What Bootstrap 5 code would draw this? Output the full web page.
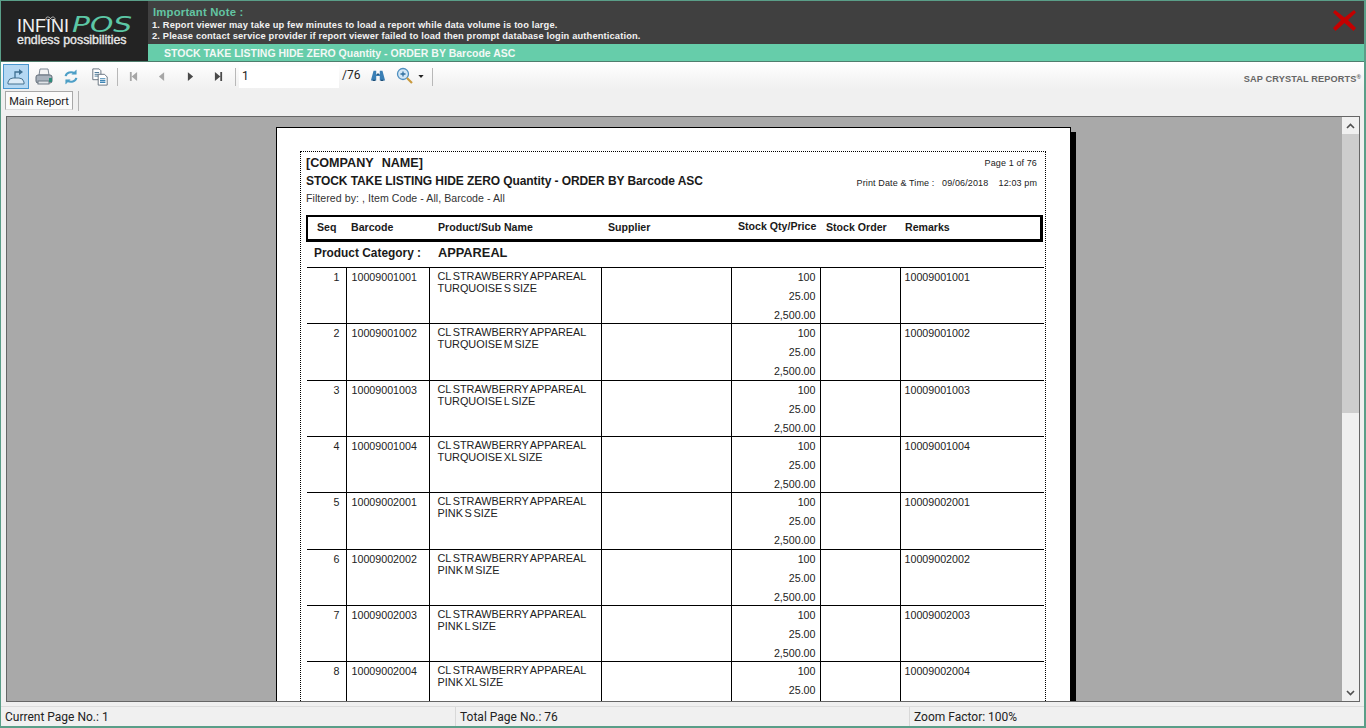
<!DOCTYPE html>
<html lang="en">
<head>
<meta charset="utf-8">
<title>Stock Take Listing</title>
<link href="https://cdn.jsdelivr.net/npm/bootstrap@5.3.0/dist/css/bootstrap.min.css" rel="stylesheet">
<style>
html,body{height:728px;overflow:hidden;margin:0}
body{font-family:"Liberation Sans",Arial,sans-serif;background:#f0f0f0;color:#000}
.app{height:728px;width:1366px;border:solid #5a9e88;border-width:1px 2px 2px 1px;overflow:hidden}
.top{height:60px}
.logo{width:147px;background:#232323;color:#fff;padding:14px 0 0 16px;line-height:1}
.logorow{height:22px}
.infini{font-size:18px;color:#f2f2f2}
.pos{display:inline-block;font-size:20.5px;font-style:italic;color:#5cc7a5;font-family:"DejaVu Sans",sans-serif;font-weight:400;margin-left:3px;transform:scaleX(1.45);transform-origin:left}
.inf{left:44px;top:15px}
.tag{font-size:12.4px;color:#e8e8e8;-webkit-text-stroke:.35px #e8e8e8;margin-top:-3px}
.note{height:43px;background:#404040;padding:4px 0 0 4px;color:#f2f2f2}
.note h6{font-size:11.3px;font-weight:700;color:#63c5a3;margin:0 0 1px 1px;line-height:14px;letter-spacing:.2px}
.note p{font-size:9.3px;font-weight:700;margin:0;line-height:11px;letter-spacing:.15px}
.band{height:17px;background:#66cdaa;color:#f2f8f5;font-size:10.5px;font-weight:700;padding-left:16px;line-height:18px;overflow:hidden}
.closex{top:7px;right:7px}
.tools{height:28px;border-top:1px solid #4f7d6d;background:linear-gradient(#fff,#f0f0f0);padding-left:2px}
.tb{width:26px;height:25px;border:1px solid transparent;margin-top:2px}
.tb.on{background:#b5d8f3;border-color:#4a97cf}
.g1{margin-left:1px}.g2{margin-left:2px}.g3{margin-left:3px}.g4{margin-left:4px}
.sep{width:1px;height:18px;background:#b8b8b8;margin-top:6px}
.pg{width:100px;height:22px;background:#fff;font:12px/20px Roboto,sans-serif;padding-left:3px;margin:4px 0 0 3px;color:#222}
.of{font:12px/26px Roboto,sans-serif;color:#222;margin-left:3px}
.bino{margin:6px 0 0 9px}
.zoomi{margin:5px 0 0 9px}
.caret{margin:13px 0 0 4px}
.endsep{margin-left:8px}
.sap{font-size:9.2px;font-weight:700;color:#666;margin:11px 3px 0 auto;letter-spacing:.12px}
.sap sup{font-size:6px}
.tabs{height:22px;padding:2px 0 0 4px}
.tabb{height:19px;width:68px;border:1px solid #a8a8a8;border-bottom-color:#ddd;background:#fbfbfb;font:11px/20px Roboto,sans-serif;text-align:center;color:#222}
.vsep{width:1px;height:20px;background:#b4b4b4;margin-left:5px}
.viewer{height:586px;margin:5px 4px 0 5px;border:1px solid #666;overflow:hidden;background:#a9a9a9}
.canvas{overflow:hidden;padding:10px 2px 0 0}
.paper{width:795px;height:700px;background:#fff;border:solid #000;border-width:1px 1px 0 1px;padding:23px 24px 0 23px;box-shadow:5px 5px 0 #000}
.rpt{border:1px dotted #000;border-bottom:0;height:700px;width:746px;padding-left:5px;color:#1a1a1a}
.head{height:63px;padding-right:8px}
.co{font-size:12.6px;font-weight:700;line-height:14px;padding-top:4px;word-spacing:.5px}
.ti{font-size:12px;font-weight:700;line-height:14px;margin-top:4px;letter-spacing:-.08px}
.fl{font-size:10.6px;line-height:12px;margin-top:4px;color:#333;letter-spacing:.05px}
.meta{font-size:9px;text-align:right;color:#222;letter-spacing:.12px}
.meta div:first-child{padding-top:6px;line-height:11px}
.meta div+div{margin-top:9px;line-height:11px}
.meta span{margin-left:5px}
.hdr{display:grid;grid-template-columns:43px 87px 170px 130px 88px 79px 1fr;width:737px;height:27px;border:solid #000;border-width:2px 3px 3px 2px;font-size:10.6px;font-weight:700;line-height:21px}
.hdr>div:first-child{padding-left:9px}
.hdr .q{line-height:18px;white-space:nowrap}
.cat{height:25px;font-weight:700;padding-left:8px;line-height:22px;font-size:11.9px}
.cat b:first-child{width:124px}
.cat b+b{font-size:12.8px}
table.report{table-layout:fixed;width:737px;margin:0 0 0 1px;border-collapse:collapse;font-size:10.7px;color:#222;--bs-table-bg:transparent}
.report td{height:56.33px;border:0;border-top:1px solid #000;border-left:1px solid #000;padding:3px 4px 0;line-height:12px;vertical-align:top}
.report td:first-child{border-left:0;text-align:right;padding-right:6px}
.report td:nth-child(2){padding-left:5px}
.report td.nm{font-size:10.9px;word-spacing:-1.4px;padding:2px 0 0 8px}
.report td.st{text-align:right;padding:0 4px 0 0}
.stk{height:55px;line-height:19px}
.sb{width:17px;background:#f0f0f0}
.thumb{height:279px;background:#cdcdcd}
.sba{height:17px}
.status{height:20px;margin-top:4px;border-top:1px solid #dcdcdc;font:12px/21px Roboto,sans-serif;color:#222}
.status>div{padding-left:4px;width:454px}
.status>div+div{border-left:1px solid #d8d8d8}
.status>div:last-child{width:auto;flex-grow:1}
</style>
</head>
<body>
<div class="app d-flex flex-column">

  <div class="top d-flex">
    <div class="logo position-relative">
      <div class="logorow d-flex align-items-baseline"><span class="infini">INFINI</span><span class="pos">POS</span></div>
      <svg class="inf position-absolute" width="11" height="5" viewBox="0 0 11 5"><path d="M5.500 2.500C4 .5 1 .5 1 2.500s3 2 4.500 0S9 .5 10 2.500s-3 2-4.500 0Z" fill="none" stroke="#ddd" stroke-width=".8"/></svg>
      <div class="tag">endless possibilities</div>
    </div>
    <div class="flex-grow-1 position-relative">
      <div class="note">
        <h6>Important Note :</h6>
        <p>1. Report viewer may take up few minutes to load a report while data volume is too large.</p>
        <p>2. Please contact service provider if report viewer failed to load then prompt database login authentication.</p>
      </div>
      <div class="band">STOCK TAKE LISTING HIDE ZERO Quantity - ORDER BY Barcode ASC</div>
      <svg class="closex position-absolute" width="25" height="24" viewBox="0 0 25 24"><path d="M3 2 12.500 9.500 22 2 24 4.500 16 12 24 20 21.500 23 12.500 15 3.500 23 1 20 9 12 1 4.500Z" fill="#c40000"/></svg>
    </div>
  </div>

  <div class="tools d-flex align-items-start">
    <div class="tb on d-flex align-items-center justify-content-center">
      <svg width="20" height="20" viewBox="0 0 20 20"><path d="M2 17h16v-2q-1-4-5-4H7q-4 0-5 4z" fill="#dcebf7" stroke="#44708f"/><path d="M9 11V5h5" fill="none" stroke="#3f6f91" stroke-width="1.300"/><path d="M13 2l4 3-4 3z" fill="#3f6f91"/></svg>
    </div>
    <div class="tb g2 d-flex align-items-center justify-content-center">
      <svg width="20" height="20" viewBox="0 0 20 20"><path d="M6 2h8l1 6H5z" fill="#f4f4f4" stroke="#7d8894"/><rect x="2" y="8" width="16" height="8" rx="2" fill="#a9b2bc" stroke="#626d78"/><rect x="4" y="14" width="11" height="3" fill="#dfe3e7" stroke="#6f7a85"/><rect x="15" y="11" width="3" height="4" fill="#2e8b7a"/></svg>
    </div>
    <div class="tb g1 d-flex align-items-center justify-content-center">
      <svg width="16" height="16" viewBox="0 0 18 18" fill="none" stroke="#4d9fc7" stroke-width="2.400"><path d="M3 8a6 5 0 0 1 10-3"/><path d="M15 10a6 5 0 0 1-10 3"/><path d="M15 1v5h-5z" fill="#4d9fc7" stroke-width=".5"/><path d="M3 17v-5h5z" fill="#4d9fc7" stroke-width=".5"/></svg>
    </div>
    <div class="tb g3 d-flex align-items-center justify-content-center">
      <svg width="18" height="18" viewBox="0 0 20 20"><path d="M2 1h7l2 2v10H2z" fill="#fff" stroke="#5f6b78"/><path d="M4 5h5M4 7h5M4 9h5" stroke="#3f6f91"/><path d="M8 7h7l3 3v9H8z" fill="#fff" stroke="#5f6b78"/><path d="M10 12h6M10 14h6M10 16h6" stroke="#3f86b5" stroke-width="1.200"/></svg>
    </div>
    <div class="sep g4"></div>
    <div class="tb g2 d-flex align-items-center justify-content-center"><svg width="9" height="11" viewBox="0 0 10 12"><path d="M1 1h2v10H1zM9 1v10L3 6z" fill="#a6a6a6"/></svg></div>
    <div class="tb g2 d-flex align-items-center justify-content-center"><svg width="7" height="11" viewBox="0 0 8 12"><path d="M7 1v10L1 6z" fill="#a6a6a6"/></svg></div>
    <div class="tb g3 d-flex align-items-center justify-content-center"><svg width="7" height="11" viewBox="0 0 8 12"><path d="M1 1v10l6-5z" fill="#4a4a4a"/></svg></div>
    <div class="tb g2 d-flex align-items-center justify-content-center"><svg width="9" height="11" viewBox="0 0 10 12"><path d="M9 1H7v10h2zM1 1v10l6-5z" fill="#4a4a4a"/></svg></div>
    <div class="sep g4"></div>
    <div class="pg">1</div>
    <div class="of">/76</div>
    <svg class="bino" width="18" height="16" viewBox="0 0 18 18"><path d="M4 3h3v4h4V3h3l3 11h-6V9H7v5H1z" fill="#3a7fb5"/><path d="M3 14h3M12 14h3M8 7h2" stroke="#1f4e75" stroke-width="1.500"/></svg>
    <svg class="zoomi" width="18" height="18" viewBox="0 0 18 18"><circle cx="7" cy="7" r="5.500" fill="#d3e7f6" stroke="#4f8fbf" stroke-width="1.300"/><path d="M4.500 7h5M7 4.500v5" stroke="#2f6f9f" stroke-width="1.300"/><path d="M11 11l5 5" stroke="#c99a3f" stroke-width="2.200"/></svg>
    <svg class="caret" width="6" height="3" viewBox="0 0 7 4"><path d="M0 0h7L3.500 4z" fill="#222"/></svg>
    <div class="sep endsep"></div>
    <div class="sap">SAP CRYSTAL REPORTS<sup>®</sup></div>
  </div>

  <div class="tabs d-flex">
    <div class="tabb">Main Report</div>
    <div class="vsep"></div>
  </div>

  <div class="viewer d-flex">
    <div class="canvas flex-grow-1">
      <div class="paper mx-auto">
        <div class="rpt">
          <div class="head d-flex justify-content-between">
            <div>
              <div class="co">[COMPANY&nbsp; NAME]</div>
              <div class="ti">STOCK TAKE LISTING HIDE ZERO Quantity - ORDER BY Barcode ASC</div>
              <div class="fl">Filtered by: , Item Code - All, Barcode - All</div>
            </div>
            <div class="meta">
              <div>Page 1 of 76</div>
              <div>Print Date &amp; Time : <span>09/06/2018</span> <span>&nbsp;12:03 pm</span></div>
            </div>
          </div>
          <div class="hdr">
            <div>Seq</div><div>Barcode</div><div>Product/Sub Name</div><div>Supplier</div><div class="q">Stock Qty/Price</div><div>Stock Order</div><div>Remarks</div>
          </div>
          <div class="cat d-flex"><b>Product Category :</b><b>APPAREAL</b></div>
          <table class="table report mb-0">
            <colgroup><col style="width:39px"><col style="width:83px"><col style="width:172px"><col style="width:130px"><col style="width:89px"><col style="width:80px"><col></colgroup>
            <tbody>
              <tr><td>1</td><td>10009001001</td><td class="nm">CL STRAWBERRY APPAREAL<br>TURQUOISE S SIZE</td><td></td><td class="st"><div class="stk">100<br>25.00<br>2,500.00</div></td><td></td><td>10009001001</td></tr>
              <tr><td>2</td><td>10009001002</td><td class="nm">CL STRAWBERRY APPAREAL<br>TURQUOISE M SIZE</td><td></td><td class="st"><div class="stk">100<br>25.00<br>2,500.00</div></td><td></td><td>10009001002</td></tr>
              <tr><td>3</td><td>10009001003</td><td class="nm">CL STRAWBERRY APPAREAL<br>TURQUOISE L SIZE</td><td></td><td class="st"><div class="stk">100<br>25.00<br>2,500.00</div></td><td></td><td>10009001003</td></tr>
              <tr><td>4</td><td>10009001004</td><td class="nm">CL STRAWBERRY APPAREAL<br>TURQUOISE XL SIZE</td><td></td><td class="st"><div class="stk">100<br>25.00<br>2,500.00</div></td><td></td><td>10009001004</td></tr>
              <tr><td>5</td><td>10009002001</td><td class="nm">CL STRAWBERRY APPAREAL<br>PINK S SIZE</td><td></td><td class="st"><div class="stk">100<br>25.00<br>2,500.00</div></td><td></td><td>10009002001</td></tr>
              <tr><td>6</td><td>10009002002</td><td class="nm">CL STRAWBERRY APPAREAL<br>PINK M SIZE</td><td></td><td class="st"><div class="stk">100<br>25.00<br>2,500.00</div></td><td></td><td>10009002002</td></tr>
              <tr><td>7</td><td>10009002003</td><td class="nm">CL STRAWBERRY APPAREAL<br>PINK L SIZE</td><td></td><td class="st"><div class="stk">100<br>25.00<br>2,500.00</div></td><td></td><td>10009002003</td></tr>
              <tr><td>8</td><td>10009002004</td><td class="nm">CL STRAWBERRY APPAREAL<br>PINK XL SIZE</td><td></td><td class="st"><div class="stk">100<br>25.00</div></td><td></td><td>10009002004</td></tr>
            </tbody>
          </table>
        </div>
      </div>
    </div>
    <div class="sb d-flex flex-column flex-shrink-0">
      <div class="sba d-flex align-items-center justify-content-center"><svg width="9" height="6" viewBox="0 0 9 6"><path d="M1 5l3.500-3.500L8 5" fill="none" stroke="#505050" stroke-width="1.600"/></svg></div>
      <div class="thumb"></div>
      <div class="sba mt-auto d-flex align-items-center justify-content-center"><svg width="9" height="6" viewBox="0 0 9 6"><path d="M1 1l3.500 3.500L8 1" fill="none" stroke="#505050" stroke-width="1.600"/></svg></div>
    </div>
  </div>

  <div class="status d-flex">
    <div>Current Page No.: 1</div>
    <div>Total Page No.: 76</div>
    <div>Zoom Factor: 100%</div>
  </div>
</div>
</body>
</html>
